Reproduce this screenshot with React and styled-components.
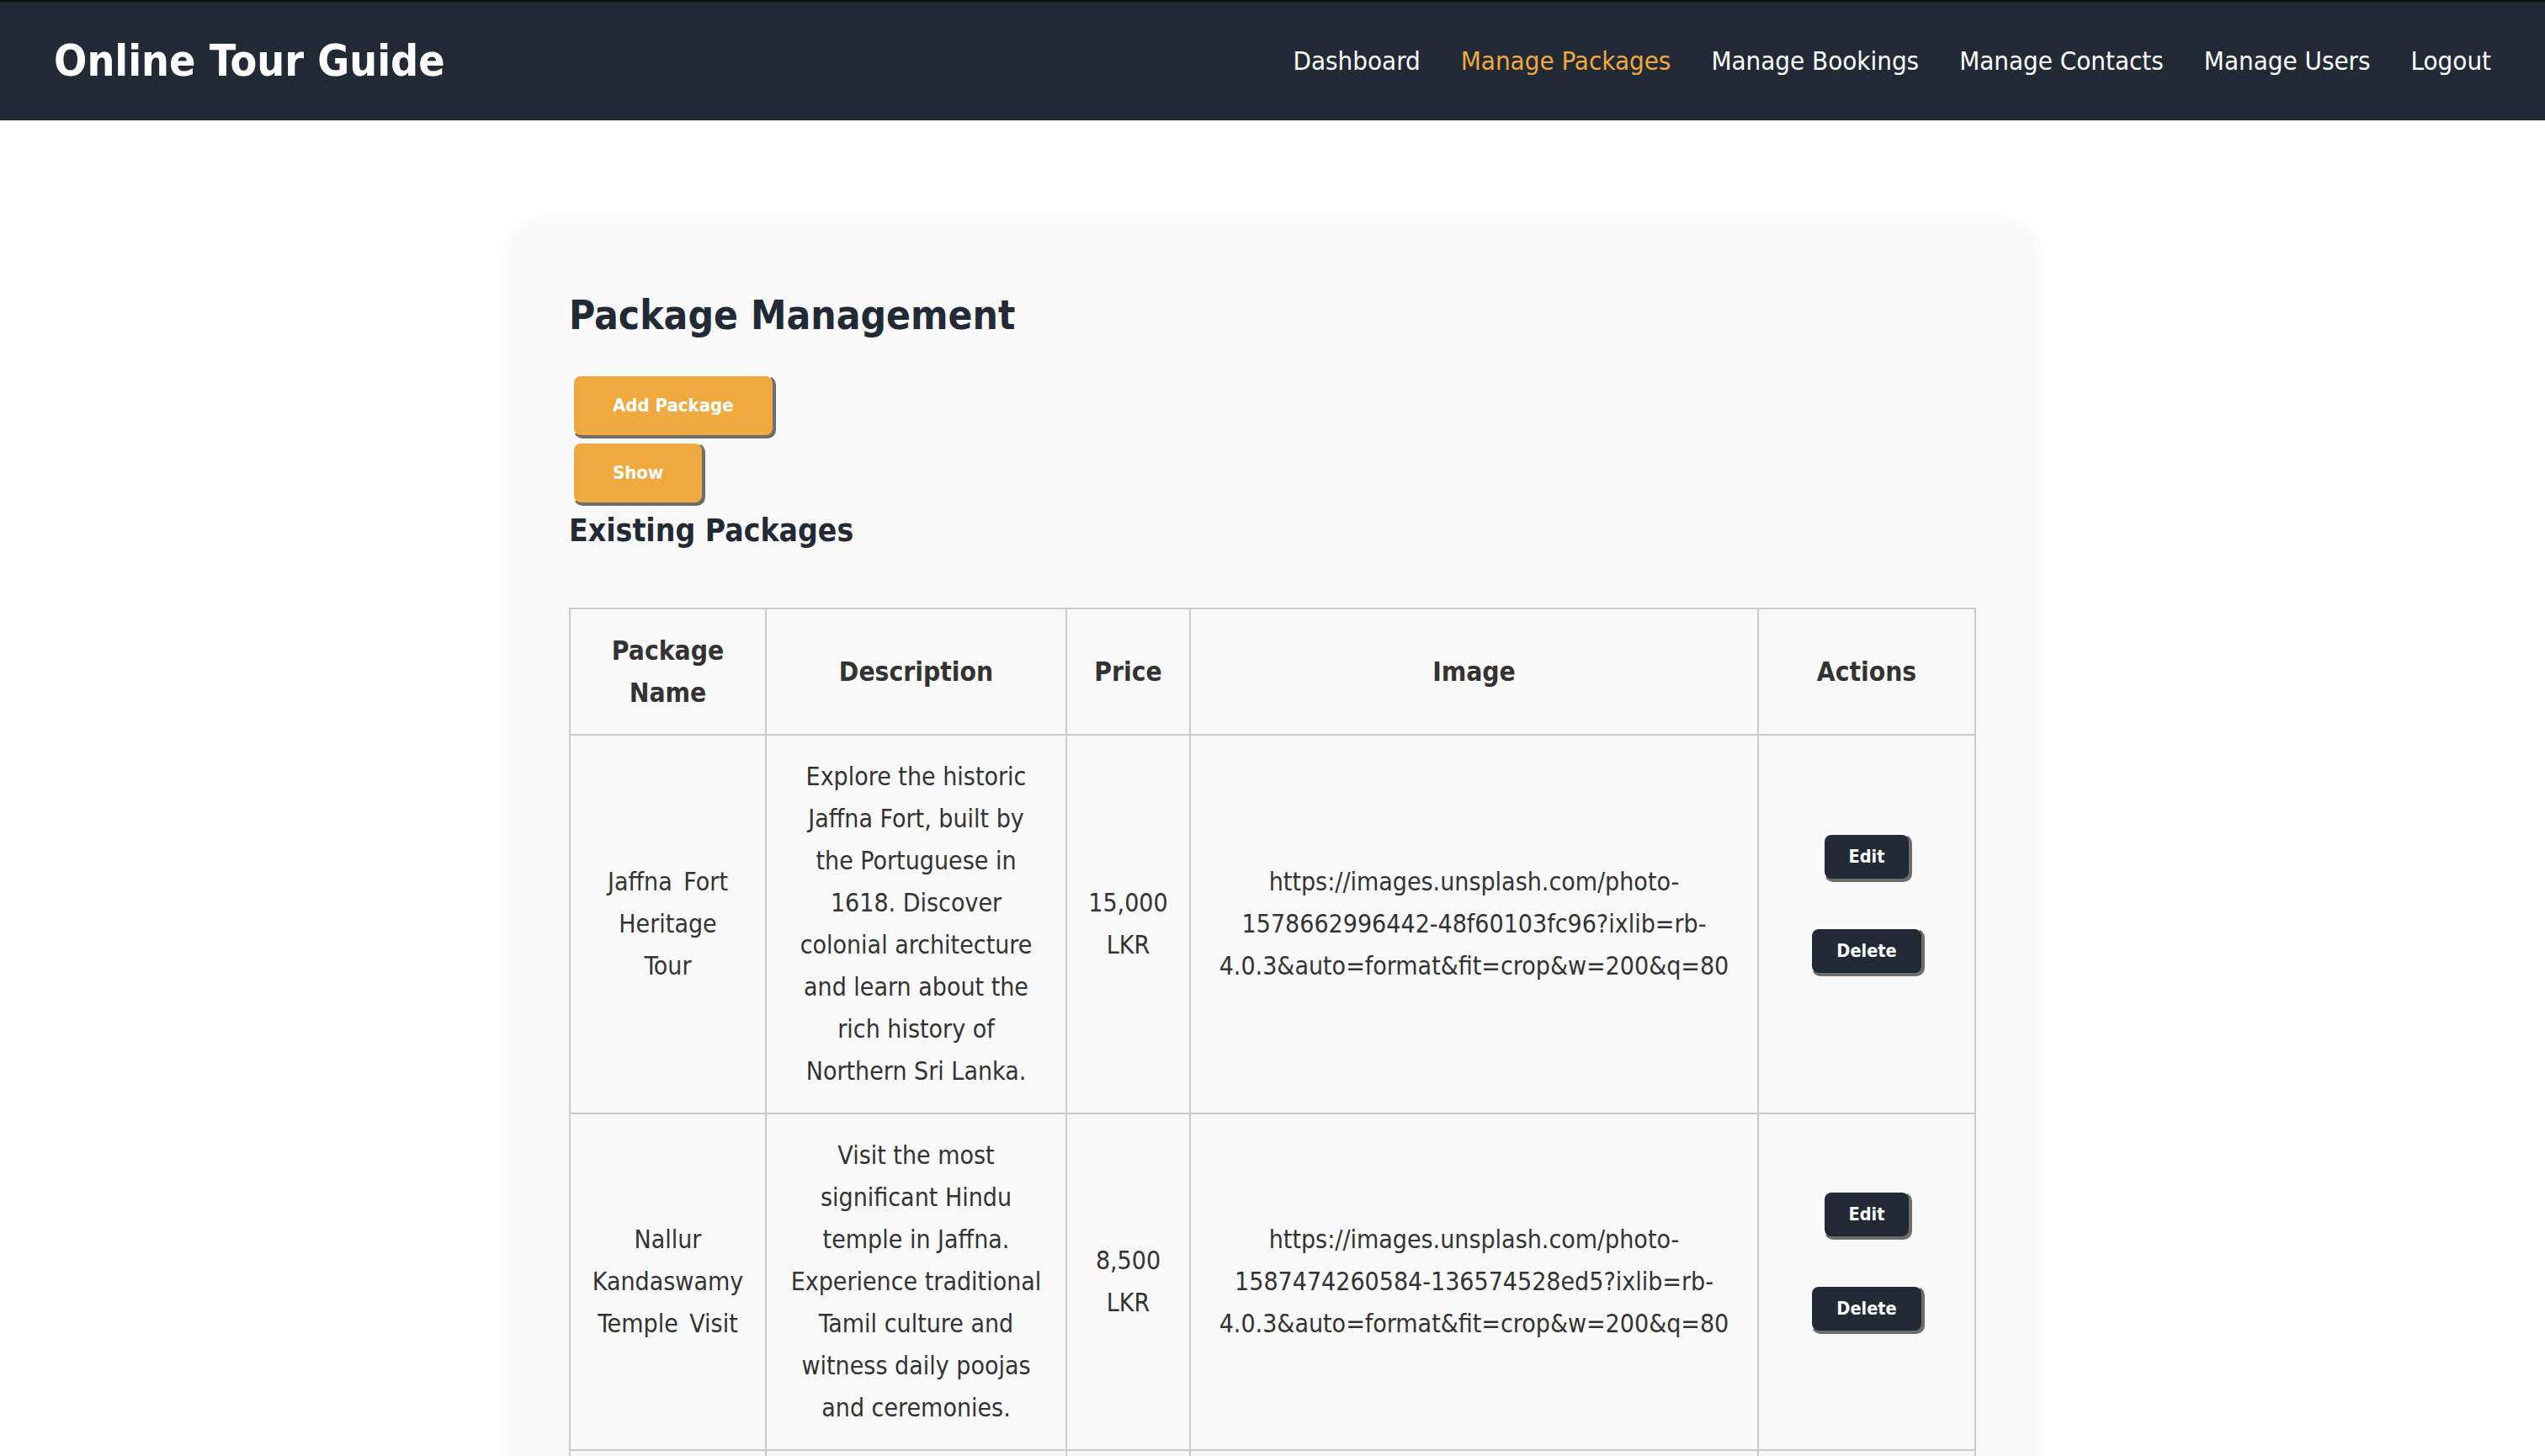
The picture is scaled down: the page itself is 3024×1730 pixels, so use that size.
import React from "react";
import styled, { createGlobalStyle } from "styled-components";

const GlobalStyle = createGlobalStyle`
  html, body {
    margin: 0;
    padding: 0;
    background: #ffffff;
  }
  body {
    font-family: "DejaVu Sans Condensed", "DejaVu Sans", sans-serif;
    color: #333333;
  }
  * { box-sizing: border-box; }
`;

const NavBar = styled.header`
  height: 143px;
  border-top: 2px solid #0e1218;
  background: #222a36;
  display: flex;
  align-items: center;
  justify-content: space-between;
  padding: 0 64px;
`;

const Brand = styled.h1`
  margin: 0;
  color: #ffffff;
  font-size: 51.5px;
  font-weight: 700;
  line-height: 1;
`;

const NavLinks = styled.nav`
  display: flex;
  align-items: center;
  gap: 48px;
`;

const NavLink = styled.a`
  color: ${(p) => (p.$active ? "#f0a93e" : "#ffffff")};
  font-size: 31px;
  text-decoration: none;
  line-height: 1;
`;

const Main = styled.main`
  display: flex;
  justify-content: center;
  padding-top: 129px;
`;

const Card = styled.section`
  width: 1800px;
  background: #f9f9f9;
  border-radius: 24px;
  box-shadow: 0 0 30px rgba(0, 0, 0, 0.07);
  padding: 64px;
  display: flex;
  flex-direction: column;
  align-items: flex-start;
`;

const Title = styled.h2`
  margin: 11px 0 0;
  font-size: 47.5px;
  line-height: 56px;
  font-weight: 700;
  color: #222a36;
`;

const ButtonColumn = styled.div`
  display: flex;
  flex-direction: column;
  align-items: flex-start;
  gap: 6px;
  margin-top: 42px;
  margin-left: 4px;
`;

const Button = styled.button`
  font-family: inherit;
  font-weight: 700;
  color: #ffffff;
  background: ${(p) => (p.$variant === "dark" ? "#222a36" : "#f0a93e")};
  font-size: ${(p) => (p.$small ? "21.5px" : "22px")};
  line-height: 26px;
  padding: ${(p) => (p.$small ? "13px 29px" : "22px 46px")};
  border: 2px solid;
  border-color: #ffffff #6d6d6d #6d6d6d #ffffff;
  box-shadow: 2px 2px 0 #6d6d6d;
  border-radius: 10px;
  cursor: pointer;
`;

const SubTitle = styled.h3`
  margin: 10px 0 0;
  font-size: 37px;
  line-height: 44px;
  font-weight: 700;
  color: #222a36;
`;

const Table = styled.table`
  margin-top: 69px;
  width: 100%;
  border-collapse: collapse;
  table-layout: fixed;
  background: #f9f9f9;
`;

const HeadCell = styled.th`
  border: 2px solid #cacaca;
  padding: 24px;
  font-size: 31.5px;
  line-height: 50px;
  font-weight: 700;
  color: #333333;
  text-align: center;
  vertical-align: middle;
`;

const Cell = styled.td`
  border: 2px solid #cacaca;
  padding: ${(p) => (p.$name ? "24px 25px" : "24px")};
  word-spacing: ${(p) => (p.$name ? "5px" : "normal")};
  font-size: 30px;
  line-height: 50px;
  color: #333333;
  text-align: center;
  vertical-align: middle;
`;

const ActionStack = styled.div`
  display: flex;
  flex-direction: column;
  align-items: center;
  gap: 56px;
  padding-bottom: 48px;
`;

const navItems = [
  "Dashboard",
  "Manage Packages",
  "Manage Bookings",
  "Manage Contacts",
  "Manage Users",
  "Logout",
];

const packages = [
  {
    name: "Jaffna Fort Heritage Tour",
    description:
      "Explore the historic Jaffna Fort, built by the Portuguese in 1618. Discover colonial architecture and learn about the rich history of Northern Sri Lanka.",
    price: "15,000 LKR",
    image:
      "https://images.unsplash.com/photo-1578662996442-48f60103fc96?ixlib=rb-4.0.3&auto=format&fit=crop&w=200&q=80",
  },
  {
    name: "Nallur Kandaswamy Temple Visit",
    description:
      "Visit the most significant Hindu temple in Jaffna. Experience traditional Tamil culture and witness daily poojas and ceremonies.",
    price: "8,500 LKR",
    image:
      "https://images.unsplash.com/photo-1587474260584-136574528ed5?ixlib=rb-4.0.3&auto=format&fit=crop&w=200&q=80",
  },
  {
    name: "Casuarina Beach Day Trip",
    description:
      "Relax on the pristine Casuarina Beach in Karainagar with its shallow waters and white sands.",
    price: "6,000 LKR",
    image:
      "https://images.unsplash.com/photo-1507525428034-b723cf961d3e?ixlib=rb-4.0.3&auto=format&fit=crop&w=200&q=80",
  },
];

const colWidths = [233, 357, 147, 675, 258];

export default function App() {
  return (
    <>
      <GlobalStyle />
      <NavBar>
        <Brand>Online Tour Guide</Brand>
        <NavLinks>
          {navItems.map((item) => (
            <NavLink key={item} href="#" $active={item === "Manage Packages"}>
              {item}
            </NavLink>
          ))}
        </NavLinks>
      </NavBar>
      <Main>
        <Card>
          <Title>Package Management</Title>
          <ButtonColumn>
            <Button>Add Package</Button>
            <Button>Show</Button>
          </ButtonColumn>
          <SubTitle>Existing Packages</SubTitle>
          <Table>
            <colgroup>
              {colWidths.map((w, i) => (
                <col key={i} style={{ width: w }} />
              ))}
            </colgroup>
            <thead>
              <tr>
                <HeadCell>Package Name</HeadCell>
                <HeadCell>Description</HeadCell>
                <HeadCell>Price</HeadCell>
                <HeadCell>Image</HeadCell>
                <HeadCell>Actions</HeadCell>
              </tr>
            </thead>
            <tbody>
              {packages.map((p) => (
                <tr key={p.name}>
                  <Cell $name>{p.name}</Cell>
                  <Cell>{p.description}</Cell>
                  <Cell>{p.price}</Cell>
                  <Cell>{p.image}</Cell>
                  <Cell>
                    <ActionStack>
                      <Button $variant="dark" $small>
                        Edit
                      </Button>
                      <Button $variant="dark" $small>
                        Delete
                      </Button>
                    </ActionStack>
                  </Cell>
                </tr>
              ))}
            </tbody>
          </Table>
        </Card>
      </Main>
    </>
  );
}
